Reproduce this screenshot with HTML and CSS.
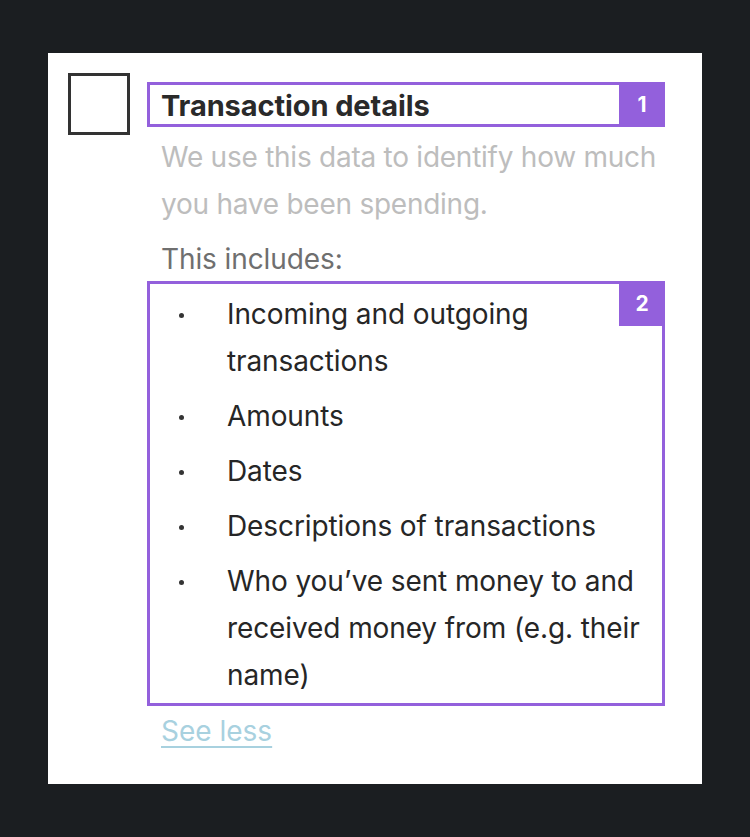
FILE: index.html
```html
<!DOCTYPE html>
<html lang="en">
<head>
<meta charset="utf-8">
<title>Transaction details</title>
<link rel="stylesheet" href="styles.css">
</head>
<body>
<main class="card">
  <div class="checkbox" role="checkbox" aria-checked="false"></div>
  <div class="content">
    <div class="marked title-box">
      <h2 class="title">Transaction details</h2>
      <span class="badge">1</span>
    </div>
    <p class="desc">We use this data to identify how much you have been spending.</p>
    <p class="includes">This includes:</p>
    <div class="marked list-box">
      <ul class="list">
        <li>Incoming and outgoing transactions</li>
        <li>Amounts</li>
        <li>Dates</li>
        <li>Descriptions of transactions</li>
        <li>Who you’ve sent money to and received money from (e.g. their name)</li>
      </ul>
      <span class="badge">2</span>
    </div>
    <a class="see-less" href="#">See less</a>
  </div>
</main>
</body>
</html>
```

FILE: styles.css
```css
* { box-sizing: border-box; }
html, body {
  margin: 0;
  background: #1b1e21;
}
body {
  padding: 53px 48px;
  font-family: Inter, "Noto Sans", "Liberation Sans", sans-serif;
}
.card {
  background: #ffffff;
  height: 731px;
  padding: 20px 37px 29px 20px;
  display: flex;
  gap: 17px;
  align-items: flex-start;
}
.checkbox {
  flex: none;
  width: 62px;
  height: 62px;
  border: 3px solid #333333;
  background: #fff;
}
.content {
  flex: 1;
  padding-top: 9px;
  display: flex;
  flex-direction: column;
  align-items: stretch;
}
.marked {
  position: relative;
  border: 3px solid #9360dc;
}
.badge {
  position: absolute;
  top: -3px;
  right: -3px;
  width: 46px;
  height: 45px;
  background: #9360dc;
  color: #fff;
  font-weight: 700;
  font-size: 21px;
  display: flex;
  align-items: center;
  justify-content: center;
}
.title-box {
  height: 45px;
  padding-left: 11px;
  padding-top: 2px;
  display: flex;
  align-items: center;
}
.title {
  margin: 0;
  font-size: 29px;
  font-weight: 700;
  color: #2a2a2a;
  letter-spacing: -0.1px;
}
.desc {
  margin: 7px 0 0;
  padding-left: 14px;
  padding-right: 2px;
  font-size: 28px;
  line-height: 47px;
  color: #bdbdbd;
  letter-spacing: -0.25px;
}
.includes {
  margin: 8px 0 0;
  padding-left: 14px;
  font-size: 28px;
  line-height: 47px;
  color: #6f6f6f;
  letter-spacing: -0.1px;
}
.list-box {
  margin-top: -2px;
  padding: 7px 0 4px 0;
}
.list {
  list-style: none;
  margin: 0;
  padding: 0 18px 0 77px;
  display: flex;
  flex-direction: column;
  gap: 8px;
}
.list li {
  position: relative;
  font-size: 28px;
  line-height: 47px;
  color: #262626;
  letter-spacing: -0.1px;
}
.list li::before {
  content: "";
  position: absolute;
  left: -48px;
  top: 22px;
  width: 5px;
  height: 5px;
  border-radius: 50%;
  background: #333;
}
.see-less {
  align-self: flex-start;
  margin-top: 2px;
  margin-left: 14px;
  font-size: 28px;
  line-height: 47px;
  color: #a8d1df;
  text-decoration: underline;
  text-underline-offset: 5px;
  text-decoration-thickness: 2px;
}
```
